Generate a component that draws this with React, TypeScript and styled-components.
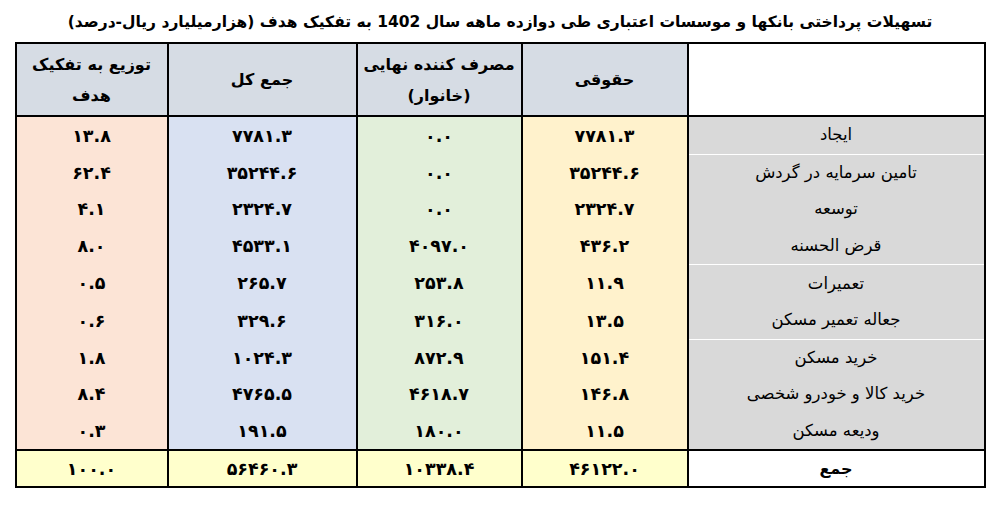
import React from "react";
import styled, { createGlobalStyle } from "styled-components";

const GlobalStyle = createGlobalStyle`
  html, body { margin: 0; padding: 0; background: #ffffff; }
  body { font-family: "DejaVu Sans", "Noto Sans", sans-serif; color: #000; }
`;

const Page = styled.div`
  width: 1000px;
  height: 505px;
  display: flex;
  flex-direction: column;
  align-items: center;
  direction: rtl;
`;

const Title = styled.h1`
  margin: 11px 0 0;
  height: 31px;
  font-size: 15.5px;
  font-weight: bold;
  letter-spacing: -0.3px;
  line-height: 22px;
  white-space: nowrap;
`;

const Table = styled.table`
  border-collapse: collapse;
  width: 969px;
  table-layout: fixed;
  direction: rtl;
  border: 2px solid #000;
`;

const HeadCell = styled.th<{ $bg: string }>`
  background: ${(p) => p.$bg};
  border: 2px solid #000;
  height: 71px;
  padding: 0 4px;
  font-size: 16px;
  font-weight: bold;
  line-height: 31px;
  text-align: center;
  vertical-align: middle;
`;

const LabelCell = styled.td<{ $bg: string; $sep: boolean }>`
  background: ${(p) => p.$bg};
  border-left: 2px solid #000;
  border-bottom: ${(p) => (p.$sep ? "1px solid #ffffff" : "none")};
  height: 36.6px;
  padding: 0;
  font-size: 16.5px;
  line-height: 18px;
  text-align: center;
  vertical-align: middle;
`;

const NumCell = styled.td<{ $bg: string }>`
  background: ${(p) => p.$bg};
  border-left: 2px solid #000;
  height: 36.6px;
  padding: 0;
  font-size: 17.5px;
  line-height: 18px;
  font-weight: bold;
  text-align: center;
  vertical-align: middle;
`;

const TotalLabel = styled.td`
  background: #ffffff;
  border-top: 2px solid #000;
  border-left: 2px solid #000;
  height: 35px;
  padding: 0;
  font-size: 16px;
  line-height: 18px;
  font-weight: bold;
  text-align: center;
  vertical-align: middle;
`;

const TotalNum = styled.td`
  background: #ffffcc;
  border-top: 2px solid #000;
  border-left: 2px solid #000;
  height: 35px;
  padding: 0;
  font-size: 17.5px;
  line-height: 18px;
  font-weight: bold;
  text-align: center;
  vertical-align: middle;
`;

const colBgs = ["#fff2cc", "#e2efda", "#d9e1f2", "#fce4d6"];

const rows: { label: string; vals: string[]; sep: boolean }[] = [
  { label: "ایجاد", vals: ["۷۷۸۱.۳", "۰.۰", "۷۷۸۱.۳", "۱۳.۸"], sep: true },
  { label: "تامین سرمایه در گردش", vals: ["۳۵۲۴۴.۶", "۰.۰", "۳۵۲۴۴.۶", "۶۲.۴"], sep: false },
  { label: "توسعه", vals: ["۲۳۲۴.۷", "۰.۰", "۲۳۲۴.۷", "۴.۱"], sep: false },
  { label: "قرض الحسنه", vals: ["۴۳۶.۲", "۴۰۹۷.۰", "۴۵۳۳.۱", "۸.۰"], sep: true },
  { label: "تعمیرات", vals: ["۱۱.۹", "۲۵۳.۸", "۲۶۵.۷", "۰.۵"], sep: false },
  { label: "جعاله تعمیر مسکن", vals: ["۱۳.۵", "۳۱۶.۰", "۳۲۹.۶", "۰.۶"], sep: true },
  { label: "خرید مسکن", vals: ["۱۵۱.۴", "۸۷۲.۹", "۱۰۲۴.۳", "۱.۸"], sep: false },
  { label: "خرید کالا و خودرو شخصی", vals: ["۱۴۶.۸", "۴۶۱۸.۷", "۴۷۶۵.۵", "۸.۴"], sep: false },
  { label: "ودیعه مسکن", vals: ["۱۱.۵", "۱۸۰.۰", "۱۹۱.۵", "۰.۳"], sep: false },
];

const totals = ["۴۶۱۲۲.۰", "۱۰۳۳۸.۴", "۵۶۴۶۰.۳", "۱۰۰.۰"];

export default function App() {
  return (
    <>
      <GlobalStyle />
      <Page>
        <Title>
          تسهیلات پرداختی بانکها و موسسات اعتباری طی دوازده ماهه سال 1402 به تفکیک هدف (هزارمیلیارد ریال-درصد)
        </Title>
        <Table>
          <colgroup>
            <col style={{ width: 297 }} />
            <col style={{ width: 166 }} />
            <col style={{ width: 165 }} />
            <col style={{ width: 189 }} />
            <col style={{ width: 152 }} />
          </colgroup>
          <thead>
            <tr>
              <HeadCell $bg="#ffffff"></HeadCell>
              <HeadCell $bg="#d6dce4">حقوقی</HeadCell>
              <HeadCell $bg="#d6dce4">
                مصرف کننده نهایی
                <br />
                (خانوار)
              </HeadCell>
              <HeadCell $bg="#d6dce4">جمع کل</HeadCell>
              <HeadCell $bg="#d6dce4">
                توزیع به تفکیک
                <br />
                هدف
              </HeadCell>
            </tr>
          </thead>
          <tbody>
            {rows.map((r) => (
              <tr key={r.label}>
                <LabelCell $bg="#d9d9d9" $sep={r.sep}>
                  {r.label}
                </LabelCell>
                {r.vals.map((v, i) => (
                  <NumCell key={i} $bg={colBgs[i]}>
                    {v}
                  </NumCell>
                ))}
              </tr>
            ))}
            <tr>
              <TotalLabel>جمع</TotalLabel>
              {totals.map((t, i) => (
                <TotalNum key={i}>{t}</TotalNum>
              ))}
            </tr>
          </tbody>
        </Table>
      </Page>
    </>
  );
}
